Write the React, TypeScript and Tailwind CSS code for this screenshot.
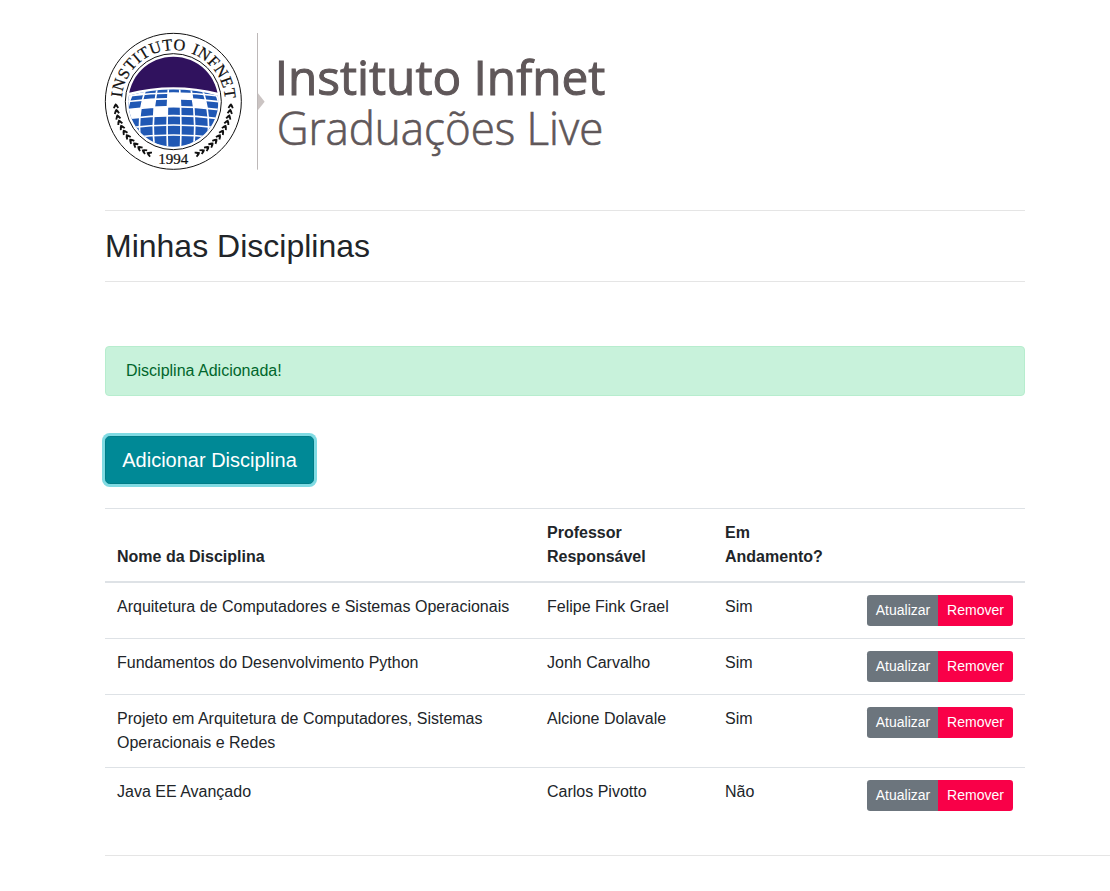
import React from "react";

const rows = [
  { name: "Arquitetura de Computadores e Sistemas Operacionais", teacher: "Felipe Fink Grael", active: "Sim" },
  { name: "Fundamentos do Desenvolvimento Python", teacher: "Jonh Carvalho", active: "Sim" },
  { name: "Projeto em Arquitetura de Computadores, Sistemas Operacionais e Redes", teacher: "Alcione Dolavale", active: "Sim" },
  { name: "Java EE Avançado", teacher: "Carlos Pivotto", active: "Não" },
];

const leafAngles = [0, 1, 2, 3, 4, 5, 6, 7, 8, 9, 10, 11].map((i) => 94.5 + i * 5.5);
const meridians = [-3.5, -2.5, -1.5, -0.5, 0.5, 1.5, 2.5, 3.5];
const parallels = [195, 212, 236, 263, 291, 321];

// Unlit tiles of the globe as [row, column], column 0 being the middle one.
const emptyTiles = [[1, 0], [1, 1], [2, -2], [2, 0], [2, 2], [3, -1], [3, -3], [0, -3]];

function meridianX(k: number, y: number) {
  const t = (y - 175) / 185;
  return 222 + k * (33 * (1 - t) * (1 - t) + 2 * 46 * t * (1 - t) + 39 * t * t);
}

function parallelY(row: number, x: number) {
  const u = (x - 220) / 140;
  return (row === 0 ? 177 : parallels[row - 1]) + 9 * u * u;
}

function tilePoints([row, col]: number[]) {
  const corners = [[row, col - 0.5], [row, col + 0.5], [row + 1, col + 0.5], [row + 1, col - 0.5]];
  return corners
    .map(([r, k]) => {
      const x = meridianX(k, parallelY(r, 220));
      return `${x},${parallelY(r, x)}`;
    })
    .join(" ");
}

function Logo() {
  return (
    <svg className="block h-[146px] w-[515px]" viewBox="0 0 1545 438" role="img" aria-label="Instituto Infnet">
      <defs>
        <clipPath id="globe"><circle cx="220" cy="221" r="135" /></clipPath>
        <clipPath id="earth"><path d="M84 204Q220 164 356 204V360H84Z" /></clipPath>
        <path id="ring" d="M65.500 209A155 155 0 0 1 374.500 209" />
      </defs>
      <circle cx="220" cy="220" r="204" fill="#fff" stroke="#111" strokeWidth="3" />
      <circle cx="220" cy="221" r="144" fill="#fff" stroke="#111" strokeWidth="3" />
      <g clipPath="url(#globe)">
        <path d="M80 80H360V196Q220 159 80 196Z" fill="#30125e" />
        <g clipPath="url(#earth)">
          <rect x="80" y="170" width="280" height="190" fill="#2058b4" />
          {emptyTiles.map((tile) => (
            <polygon key={tile.join()} points={tilePoints(tile)} fill="#fff" />
          ))}
          <path d="M80 175H108L84 225Z" fill="#fff" />
          <g fill="none" stroke="#fff" strokeWidth="5">
            {meridians.map((k) => (
              <path key={k} d={`M${222 + k * 33} 175Q${222 + k * 46} 267.500 ${222 + k * 39} 360`} />
            ))}
            {parallels.map((y) => (
              <path key={y} d={`M80 ${y + 9}Q220 ${y - 9} 360 ${y + 9}`} />
            ))}
          </g>
        </g>
      </g>
      <g fontFamily="Liberation Serif, serif" fill="#111" stroke="#111" strokeWidth="0.7">
        <text fontSize="49" textLength="466" lengthAdjust="spacing" wordSpacing="5">
          <textPath href="#ring">INSTITUTO INFNET</textPath>
        </text>
        <text x="220" y="407" fontSize="45" textAnchor="middle">1994</text>
      </g>
      {[1, -1].map((side) => (
        <g key={side} transform={side === 1 ? undefined : "translate(440 0) scale(-1 1)"} fill="#111">
          {leafAngles.map((a) => (
            <path key={a} d="M-9 6Q-5-5 0-8Q5-5 9 6L4 8Q2 3 0 2Q-2 3-4 8Z" transform={`rotate(${a} 220 220) translate(220 47) rotate(-90)`} />
          ))}
        </g>
      ))}
      <path d="M472.500 15V425" stroke="#bdb8b8" strokeWidth="3" />
      <path d="M474 196L494 221L474 246Z" fill="#cbc4c3" />
      <g fontFamily="Open Sans, sans-serif" fill="#5f5759" stroke="#5f5759">
        <text x="524" y="201" fontSize="145" fontWeight="400" strokeWidth="3" textLength="992" lengthAdjust="spacingAndGlyphs">Instituto Infnet</text>
        <text x="530" y="350" fontSize="136" fontWeight="300" strokeWidth="2" textLength="980" lengthAdjust="spacingAndGlyphs">Graduações Live</text>
      </g>
    </svg>
  );
}

export default function App() {
  return (
    <div className="h-[891px] overflow-hidden bg-white pl-[105px] font-['Liberation_Sans',Arial,sans-serif] text-base leading-6 text-[#212529]">
      <main className="w-[920px]">
        <header className="h-[210px] pt-7">
          <div className="-ml-[5px]"><Logo /></div>
        </header>
        <h1 className="h-[72px] border-y border-[#e5e5e5] pt-4 text-[32px] leading-[38.4px]">Minhas Disciplinas</h1>
        <div className="mt-16 h-[50px] rounded border border-[#b7edce] bg-[#c8f2db] px-5 py-3 text-[#00662c]">Disciplina Adicionada!</div>
        <button className="mt-10 block h-12 w-[209px] rounded-[4.8px] border border-[#007c87] bg-[#008996] text-xl leading-[30px] text-white shadow-[0_0_0_3px_#80dbe3]">Adicionar Disciplina</button>
        <table className="mt-6 w-full table-fixed border-collapse text-left">
          <colgroup>
            <col className="w-[430px]" /><col className="w-[178px]" /><col className="w-[142px]" /><col className="w-[170px]" />
          </colgroup>
          <thead>
            <tr className="border-t border-b-2 border-[#dee2e6] align-bottom">
              <th className="p-3">Nome da Disciplina</th>
              <th className="p-3">Professor<br />Responsável</th>
              <th className="p-3">Em<br />Andamento?</th>
              <th />
            </tr>
          </thead>
          <tbody>
            {rows.map((row) => (
              <tr key={row.name} className="border-t border-[#dee2e6] align-top">
                <td className="p-3">{row.name}</td>
                <td className="p-3">{row.teacher}</td>
                <td className="p-3">{row.active}</td>
                <td className="p-3">
                  <div className="flex justify-end text-sm leading-[21px] text-white">
                    <button className="h-[31px] w-[71px] rounded-l-[3.2px] bg-[#6c757d] pl-px">Atualizar</button>
                    <button className="h-[31px] w-[75px] rounded-r-[3.2px] bg-[#f90048]">Remover</button>
                  </div>
                </td>
              </tr>
            ))}
          </tbody>
        </table>
      </main>
      <hr className="mt-8 border-[#e5e5e5]" />
    </div>
  );
}
